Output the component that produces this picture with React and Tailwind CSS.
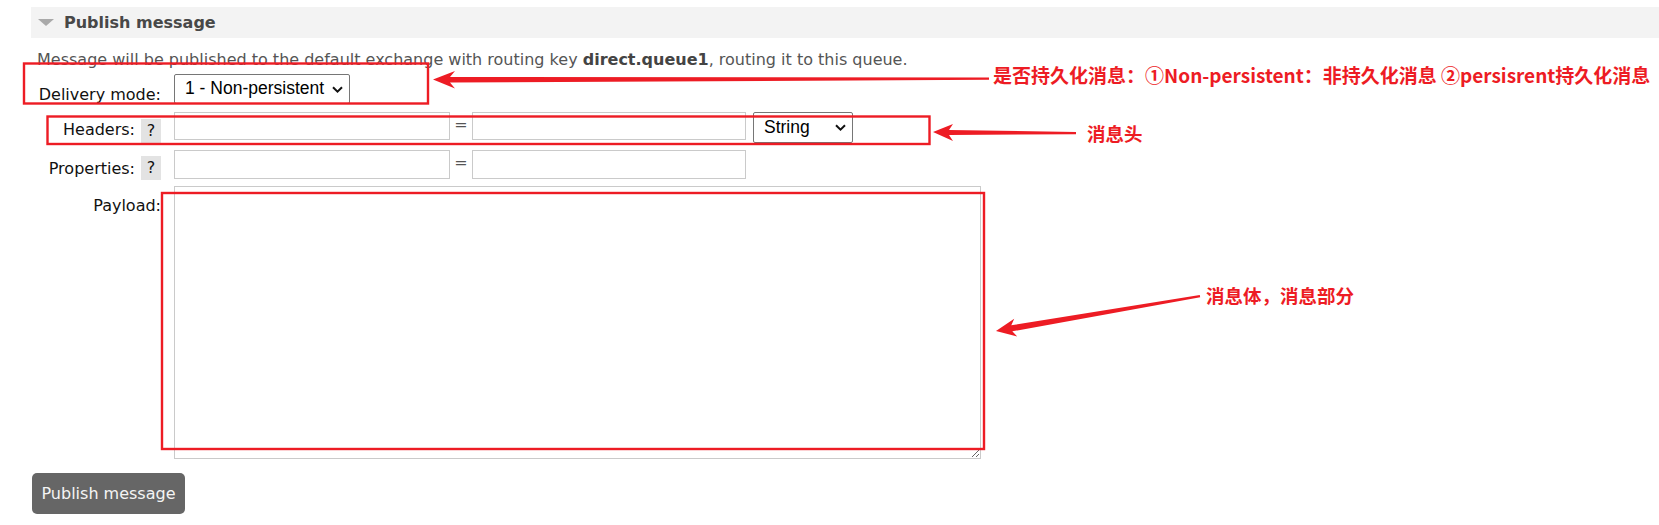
import React from 'react';

const RED = '#ed1c24';

const Chevron = () => (
  <svg width="11" height="7" viewBox="0 0 11 7" className="shrink-0">
    <path d="M1 1.2 L5.5 5.6 L10 1.2" fill="none" stroke="#111" strokeWidth="2" />
  </svg>
);

const FakeSelect = ({ value, className }) => (
  <div
    className={`flex items-center justify-between rounded-[2px] border border-[#767676] bg-white pl-[10px] pr-[6px] font-['Liberation_Sans',Arial,sans-serif] text-[17.5px] text-black ${className}`}
  >
    <span className="leading-none">{value}</span>
    <Chevron />
  </div>
);

const Help = ({ top }) => (
  <span
    className={`ml-[6px] flex h-[24px] w-[20px] items-center justify-center bg-[#e3e3e3] text-[16px] text-[#111] ${top}`}
  >
    ?
  </span>
);

const Annotations = () => (
  <svg
    className="pointer-events-none absolute left-0 top-0"
    width="1659"
    height="525"
    viewBox="0 0 1659 525"
  >
    <g fill="none" stroke={RED} strokeWidth="2.4">
      <rect x="24" y="63.5" width="404" height="40" />
      <rect x="47.5" y="116.5" width="882" height="27.5" />
      <rect x="162" y="193" width="822" height="256" />
    </g>
    <g fill={RED}>
      <polygon points="433,79.5 455,71 450,77 989,77.5 989,79.8 450,82.5 455,88.5" />
      <polygon points="933,132 953,124 949,130 1076,132 1076,134.2 949,135 953,141" />
      <polygon points="996,331 1014.2,318.7 1011.3,325.3 1199.8,295 1200.2,297.2 1012.3,331.3 1017.2,336.5" />
    </g>
  </svg>
);

const Note = ({ className, children }) => (
  <div
    className={`absolute whitespace-nowrap font-['Noto_Sans_CJK_SC','Noto_Sans',sans-serif] font-bold leading-[18px] text-[#ed1c24] ${className}`}
  >
    {children}
  </div>
);

export default function App() {
  return (
    <div className="relative h-[525px] w-[1659px] overflow-hidden bg-white font-['DejaVu_Sans',Verdana,sans-serif]">
      <div className="pl-[31px] pt-[7px]">
        <div className="flex h-[31px] items-center bg-[#f3f3f3]">
          <svg width="16" height="8" viewBox="0 0 16 8" className="ml-[7px]">
            <polygon points="0,0 16,0 8,7" fill="#a9a9a9" />
          </svg>
          <span className="ml-[10px] text-[16px] font-bold text-[#484848]">Publish message</span>
        </div>

        <p className="mt-[12px] pl-[6px] text-[16px] leading-[20px] text-[#555]">
          Message will be published to the default exchange with routing key{' '}
          <b className="text-[#444]">direct.queue1</b>, routing it to this queue.
        </p>

        <div className="mt-[4px] flex h-[30px]">
          <div className="flex w-[130px] justify-end pt-[11px] text-[16px] leading-[20px] text-[#111]">
            Delivery mode:
          </div>
          <FakeSelect value="1 - Non-persistent" className="ml-[13px] h-[30px] w-[176px]" />
        </div>

        <div className="mt-[8px] flex h-[31px]">
          <div className="flex w-[130px] items-start justify-end text-[16px] leading-[20px] text-[#111]">
            <span className="pt-[8px]">Headers:</span>
            <Help top="mt-[7px]" />
          </div>
          <input className="ml-[13px] h-[28px] w-[276px] border border-[#cacaca] bg-white" />
          <span className="w-[22px] pt-[3px] text-center text-[16px] leading-[20px] text-[#555]">=</span>
          <input className="h-[28px] w-[274px] border border-[#cacaca] bg-white" />
          <FakeSelect value="String" className="ml-[7px] h-[31px] w-[100px]" />
        </div>

        <div className="mt-[7px] flex h-[29px]">
          <div className="flex w-[130px] items-start justify-end text-[16px] leading-[20px] text-[#111]">
            <span className="pt-[9px]">Properties:</span>
            <Help top="mt-[6px]" />
          </div>
          <input className="ml-[13px] h-[29px] w-[276px] border border-[#cacaca] bg-white" />
          <span className="w-[22px] pt-[3px] text-center text-[16px] leading-[20px] text-[#555]">=</span>
          <input className="h-[29px] w-[274px] border border-[#cacaca] bg-white" />
        </div>

        <div className="mt-[7px] flex">
          <div className="flex w-[130px] justify-end pt-[10px] text-[16px] leading-[20px] text-[#111]">
            Payload:
          </div>
          <textarea className="ml-[13px] block h-[273px] w-[807px] border border-[#cacaca] bg-white" />
        </div>

        <button className="ml-[1px] mt-[14px] h-[41px] w-[153px] rounded-[5px] bg-[#666] text-[16px] text-[#f4f4f4]">
          Publish message
        </button>
      </div>

      <Annotations />

      <Note className="left-[993px] top-[66px] text-[19px]">
        是否持久化消息：①Non-persistent：非持久化消息 ②persisrent持久化消息
      </Note>
      <Note className="left-[1087px] top-[124px] text-[18.5px]">消息头</Note>
      <Note className="left-[1206px] top-[286px] text-[18.5px]">消息体，消息部分</Note>
    </div>
  );
}
